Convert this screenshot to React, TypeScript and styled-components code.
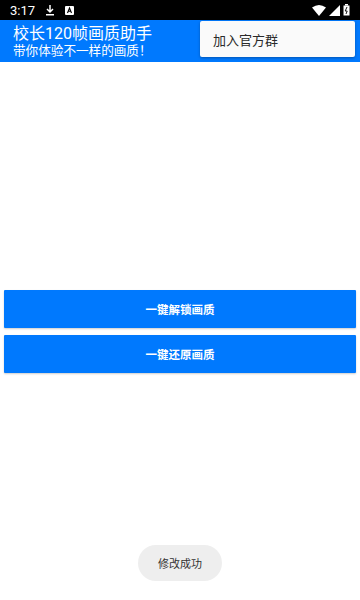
import React from "react";
import styled, { createGlobalStyle } from "styled-components";

const Global = createGlobalStyle`
  html, body { margin: 0; padding: 0; background: #ffffff; }
  body { font-family: Roboto, "Noto Sans CJK SC", sans-serif; }
`;

const Screen = styled.div`
  position: relative;
  width: 360px;
  height: 600px;
  display: flex;
  flex-direction: column;
  background: #ffffff;
  overflow: hidden;
`;

const StatusBar = styled.div`
  height: 20px;
  background: #000000;
  display: flex;
  align-items: center;
  justify-content: space-between;
  padding: 0 10px 0 10px;
  color: #ffffff;
  flex-shrink: 0;
`;

const StatusLeft = styled.div`
  display: flex;
  align-items: center;
  gap: 10px;
  font-size: 13px;
  font-family: Roboto, sans-serif;
`;

const StatusRight = styled.div`
  display: flex;
  align-items: center;
  gap: 3px;
`;

const AppBar = styled.div`
  height: 42px;
  background: #0079fe;
  display: flex;
  flex-direction: column;
  justify-content: center;
  padding: 0 13px;
  color: #ffffff;
  flex-shrink: 0;
`;

const Title = styled.div`
  font-size: 16px;
  line-height: 19px;
  font-family: Roboto, "Noto Sans CJK SC", sans-serif;
`;

const Subtitle = styled.div`
  font-size: 12.6px;
  line-height: 16px;
  font-family: Roboto, "Noto Sans CJK SC", sans-serif;
`;

const Body = styled.div`
  flex: 1;
  display: flex;
  flex-direction: column;
  padding: 228px 4px 0 4px;
  gap: 7px;
`;

const ActionButton = styled.button`
  height: 38px;
  border: none;
  border-radius: 1px;
  background: #0079fe;
  color: #ffffff;
  font-size: 11.5px;
  font-weight: bold;
  font-family: Roboto, "Noto Sans CJK SC", sans-serif;
  box-shadow: 0 1px 2px rgba(0, 0, 0, 0.2);
  padding: 0;
`;

const Menu = styled.div`
  position: absolute;
  top: 21px;
  left: 200px;
  width: 155px;
  height: 36px;
  background: #fafafa;
  border-radius: 2px;
  box-shadow: 0 1px 3px rgba(0, 0, 0, 0.3);
  display: flex;
  align-items: center;
  padding-left: 13px;
  box-sizing: border-box;
  font-size: 13px;
  color: #2a2a2a;
  font-family: Roboto, "Noto Sans CJK SC", sans-serif;
`;

const Toast = styled.div`
  position: absolute;
  left: 138px;
  top: 545px;
  width: 84px;
  height: 36px;
  border-radius: 18px;
  background: #eeeeee;
  display: flex;
  align-items: center;
  justify-content: center;
  font-size: 11px;
  color: #333333;
  font-family: Roboto, "Noto Sans CJK SC", sans-serif;
`;

export default function App() {
  return (
    <>
      <Global />
      <Screen>
        <StatusBar>
          <StatusLeft>
            <span>3:17</span>
            <svg width="10" height="11" viewBox="0 0 10 11">
              <path d="M5 0v6M2 4l3 3 3-3" stroke="#fff" strokeWidth="1.5" fill="none" />
              <rect x="1" y="9" width="8" height="1.5" fill="#fff" />
            </svg>
            <svg width="9" height="9" viewBox="0 0 9 9">
              <rect x="0" y="0" width="9" height="9" rx="1" fill="#fff" />
              <path d="M2.5 7L4.5 2l2 5M3.3 5.3h2.4" stroke="#000" strokeWidth="1.1" fill="none" />
            </svg>
          </StatusLeft>
          <StatusRight>
            <svg width="14" height="11" viewBox="0 0 14 11">
              <path d="M0 2.5Q7 -2.5 14 2.5L7 11Z" fill="#fff" />
            </svg>
            <svg width="11" height="11" viewBox="0 0 11 11">
              <path d="M11 0V11H0Z" fill="#fff" />
            </svg>
            <svg width="7" height="12" viewBox="0 0 7 12">
              <rect x="2" y="0" width="3" height="1.5" fill="#fff" />
              <rect x="0.5" y="1.5" width="6" height="10" fill="#fff" />
              <path d="M4 3L2.2 7h2L3 10" stroke="#000" strokeWidth="0.9" fill="none" />
            </svg>
          </StatusRight>
        </StatusBar>
        <AppBar>
          <Title>校长120帧画质助手</Title>
          <Subtitle>带你体验不一样的画质！</Subtitle>
        </AppBar>
        <Body>
          <ActionButton>一键解锁画质</ActionButton>
          <ActionButton>一键还原画质</ActionButton>
        </Body>
        <Menu>加入官方群</Menu>
        <Toast>修改成功</Toast>
      </Screen>
    </>
  );
}
